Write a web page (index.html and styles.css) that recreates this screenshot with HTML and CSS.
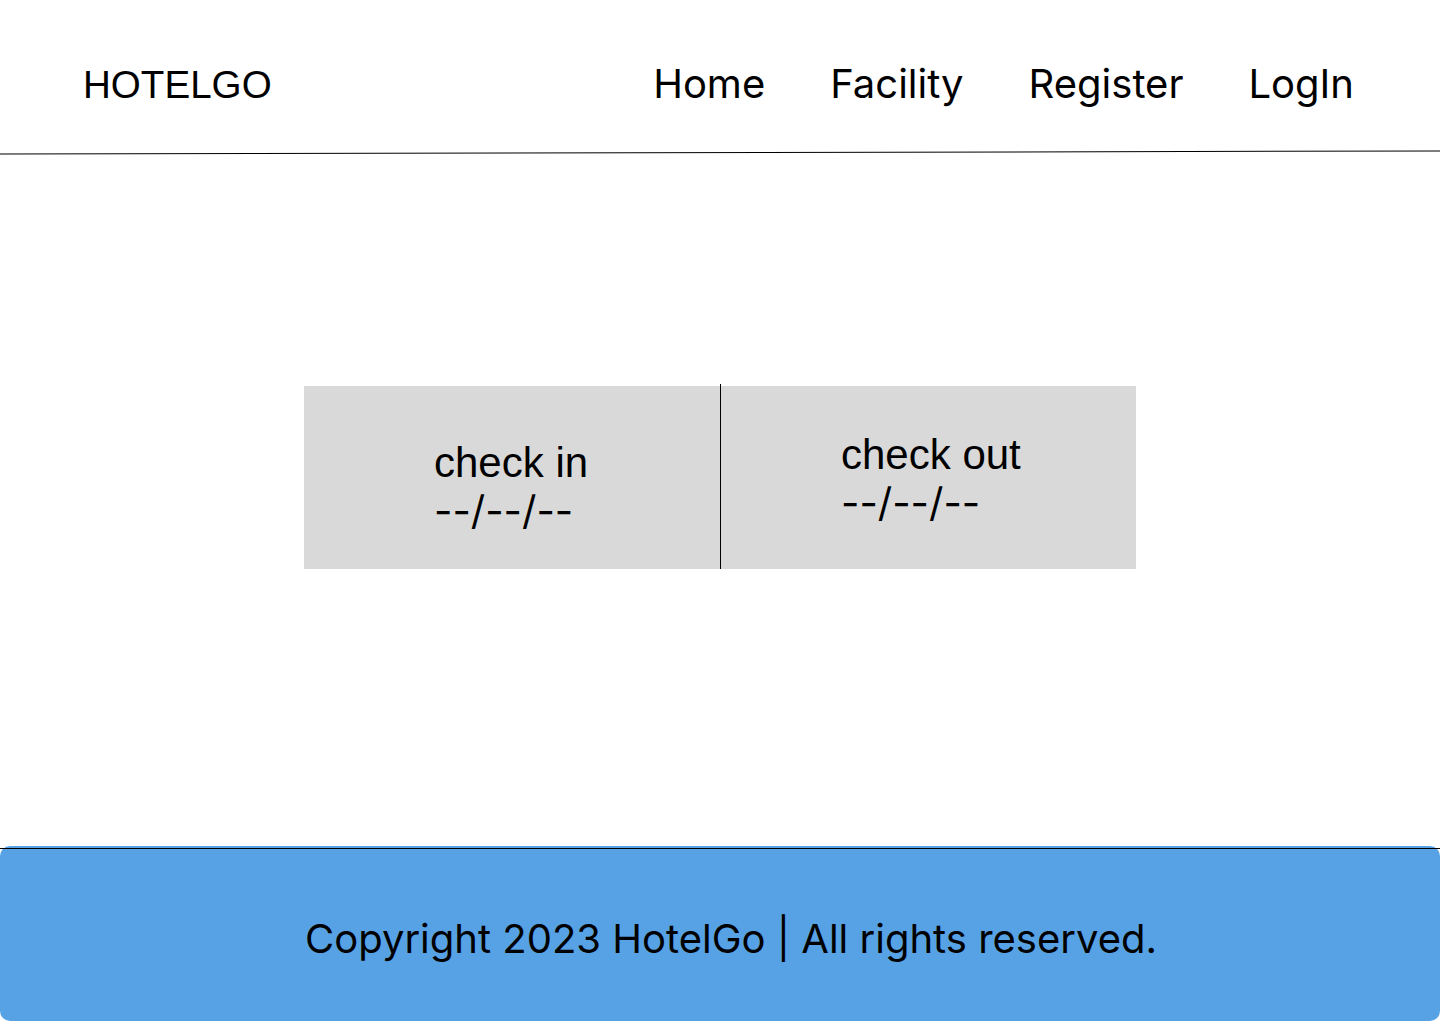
FILE: index.html
```html
<!DOCTYPE html>
<html lang="en">
<head>
<meta charset="utf-8">
<title>HotelGo</title>
<link rel="stylesheet" href="styles.css">
</head>
<body>
<header class="header">
  <div class="logo">HOTELGO</div>
  <nav class="nav">
    <a class="nav-link" href="#">Home</a>
    <a class="nav-link" href="#">Facility</a>
    <a class="nav-link" href="#">Register</a>
    <a class="nav-link" href="#">LogIn</a>
  </nav>
</header>
<div class="rule"></div>
<main class="main">
  <div class="card">
    <div class="cell cell-in">
      <span class="label">check in</span>
      <span class="date">--/--/--</span>
    </div>
    <div class="cell cell-out">
      <span class="label">check out</span>
      <span class="date">--/--/--</span>
    </div>
  </div>
</main>
<footer class="footer">
  <div class="footer-rule"></div>
  <p class="footer-text">Copyright 2023 HotelGo | All rights reserved.</p>
</footer>
</body>
</html>
```
FILE: styles.css
```css
html, body {
  margin: 0;
  padding: 0;
  background: #ffffff;
}
body {
  font-family: Inter, "Liberation Sans", sans-serif;
  color: #000000;
  width: 1440px;
  height: 1024px;
  overflow: hidden;
}
.header {
  box-sizing: border-box;
  height: 152px;
  padding: 59px 86px 0 83px;
  display: flex;
  justify-content: space-between;
  align-items: baseline;
}
.logo {
  font-family: "Liberation Sans", Arial, sans-serif;
  font-size: 38.6px;
}
.nav {
  display: flex;
  align-items: baseline;
  gap: 65px;
}
.nav-link {
  font-family: Inter, sans-serif;
  font-size: 40px;
  color: #000000;
  text-decoration: none;
}
.rule {
  height: 1px;
  background: #000000;
  transform: rotate(-0.12deg);
}
.main {
  box-sizing: border-box;
  height: 693px;
  padding-top: 233px;
}
.card {
  position: relative;
  width: 832px;
  height: 183px;
  margin: 0 auto;
  background: #d9d9d9;
  display: grid;
  grid-template-columns: 416px 416px;
}
.card::before {
  content: "";
  position: absolute;
  left: 416px;
  top: -2px;
  bottom: 0;
  width: 1px;
  background: #000000;
}
.cell {
  display: flex;
  flex-direction: column;
  align-items: flex-start;
}
.label {
  font-family: "Liberation Sans", Arial, sans-serif;
  font-size: 42px;
  line-height: 48px;
}
.date {
  font-family: Inter, sans-serif;
  font-size: 40px;
  line-height: 48px;
}
.cell-in {
  padding: 53px 0 0 130px;
}
.cell-out {
  padding: 45px 0 0 121px;
}
.footer {
  box-sizing: border-box;
  height: 175px;
  background: #57a2e5;
  border-radius: 10px;
  padding-top: 2px;
  display: flex;
  flex-direction: column;
}
.footer-rule {
  height: 1px;
  background: #000000;
}
.footer-text {
  margin: 0;
  flex: 1;
  display: flex;
  align-items: center;
  justify-content: center;
  padding: 6px 0 0 22px;
  font-size: 40px;
}
```
